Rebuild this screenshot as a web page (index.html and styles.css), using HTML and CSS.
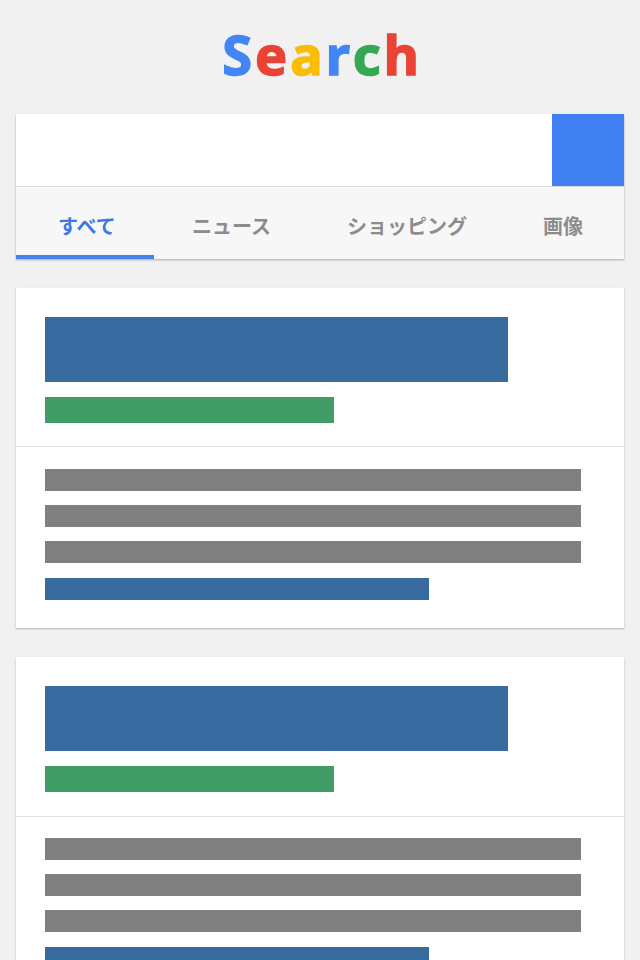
FILE: index.html
```html
<!DOCTYPE html>
<html lang="ja">
  <head>
    <meta charset="UTF-8" />
    <meta name="viewport" content="width=device-width, initial-scale=1.0" />
    <title>Search</title>
    <link rel="stylesheet" href="styles.css">
  </head>
  <body>
    <h1 class="logo">
      <span class="blue">S</span><span class="red">e</span><span class="yellow">a</span><span class="blue">r</span><span class="green">c</span><span class="red">h</span>
    </h1>

    <div class="search-panel">
      <div class="search-row">
        <div class="search-input"></div>
        <div class="search-button"></div>
      </div>
      <nav class="tabs">
        <a class="tab active">すべて</a>
        <a class="tab">ニュース</a>
        <a class="tab">ショッピング</a>
        <a class="tab">画像</a>
      </nav>
    </div>

    <div class="card">
      <div class="card-head">
        <div class="bar bar-title"></div>
        <div class="bar bar-url"></div>
      </div>
      <div class="card-body">
        <div class="bar bar-text"></div>
        <div class="bar bar-text"></div>
        <div class="bar bar-text"></div>
        <div class="bar bar-link"></div>
      </div>
    </div>

    <div class="card">
      <div class="card-head">
        <div class="bar bar-title"></div>
        <div class="bar bar-url"></div>
      </div>
      <div class="card-body">
        <div class="bar bar-text"></div>
        <div class="bar bar-text"></div>
        <div class="bar bar-text"></div>
        <div class="bar bar-link"></div>
      </div>
    </div>
  </body>
</html>
```

FILE: styles.css
```css
html,
body {
  height: 960px;
  overflow: hidden;
}

body {
  margin: 0;
  padding: 0 16px;
  background-color: #f1f1f1;
  font-family: "Noto Sans CJK JP", "Noto Sans", sans-serif;
}

.logo {
  display: flex;
  justify-content: center;
  align-items: center;
  height: 108px;
  margin: 0;
  padding-bottom: 6px;
  padding-left: 4px;
  font-family: "Noto Sans", sans-serif;
  font-size: 54px;
  font-weight: 700;
  line-height: 1;
  letter-spacing: 3px;
  -webkit-text-stroke: 1.5px currentColor;
  stroke-linejoin: round;
}

.blue {
  color: #4285f4;
}

.red {
  color: #ea4335;
}

.yellow {
  color: #fbbc05;
}

.green {
  color: #34a853;
}

.search-panel {
  background-color: #f7f7f7;
  box-shadow: 0 1px 2px rgba(0, 0, 0, 0.3);
}

.search-row {
  display: flex;
  height: 72px;
  background-color: #fff;
  border-bottom: 1px solid #dcdcdc;
}

.search-input {
  flex: 1;
}

.search-button {
  width: 72px;
  background-color: #4080f2;
}

.tabs {
  display: flex;
  height: 72px;
}

.tab {
  height: 72px;
  box-sizing: border-box;
  padding: 25px 38px 0;
  font-size: 20px;
  font-weight: 700;
  line-height: 28px;
  color: #8c8c8c;
}

.tab.active {
  width: 138px;
  padding-left: 42px;
  padding-right: 0;
  color: #3b78e7;
  border-bottom: 4px solid #4581ec;
}

.card {
  margin-top: 29px;
  background-color: #fff;
  box-shadow: 0 1px 2px rgba(0, 0, 0, 0.25);
}

.card-head {
  height: 129px;
  padding-top: 29px;
  padding-left: 29px;
  border-bottom: 1px solid #e2e2e2;
}

.card-body {
  height: 159px;
  padding-top: 22px;
  padding-left: 29px;
}

.card + .card .card-head {
  height: 130px;
}

.card + .card .card-body {
  padding-top: 21px;
}

.bar {
  margin-bottom: 14px;
}

.bar-title {
  width: 463px;
  height: 65px;
  margin-bottom: 15px;
  background-color: #386ca0;
}

.bar-url {
  width: 289px;
  height: 26px;
  background-color: #409d66;
}

.bar-text {
  width: 536px;
  height: 22px;
  background-color: #808080;
}

.bar-link {
  width: 384px;
  height: 22px;
  margin-top: 15px;
  background-color: #386ca0;
}
```
